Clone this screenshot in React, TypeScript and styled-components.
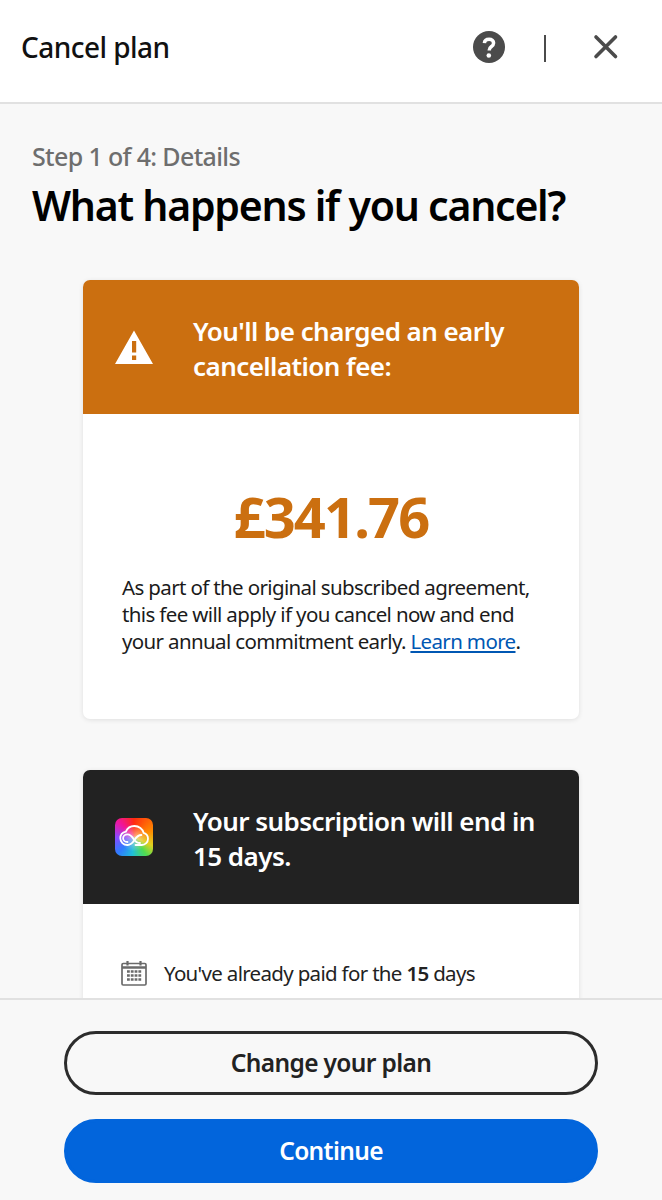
import React from "react";
import styled, { createGlobalStyle } from "styled-components";

const Global = createGlobalStyle`
  html, body { margin: 0; padding: 0; height: 1200px; overflow: hidden; background: #f8f8f8; }
  #root { height: 1200px; }
  * { box-sizing: border-box; }
`;

const Page = styled.div`
  height: 1200px;
  display: flex;
  flex-direction: column;
  overflow: hidden;
  background: #f8f8f8;
  font-family: "Noto Sans", "Open Sans", sans-serif;
  color: #000;
`;

const Header = styled.header`
  flex: none;
  height: 104px;
  background: #fff;
  border-bottom: 2px solid #e1e1e1;
  display: flex;
  align-items: center;
  padding: 0 43px 8px 21px;
`;

const HeaderTitle = styled.div`
  flex: 1;
  font-size: 28px;
  font-weight: 500;
  letter-spacing: -0.55px;
  color: #111;
`;

const HeaderActions = styled.div`
  display: flex;
  align-items: center;
`;

const Divider = styled.span`
  width: 2px;
  height: 27px;
  background: #4b4b4b;
  margin: 2px 47px 0 38px;
`;

const Main = styled.main`
  flex: 1;
  min-height: 0;
  overflow: hidden;
  padding: 34px 83px 0 32px;
`;

const Step = styled.div`
  font-size: 25px;
  line-height: 36px;
  font-weight: 500;
  letter-spacing: -0.65px;
  color: #6e6e6e;
`;

const Title = styled.h1`
  margin: 3px 0 47px;
  font-size: 41px;
  line-height: 56px;
  font-weight: 600;
  letter-spacing: -1.25px;
  color: #000;
  white-space: nowrap;
`;

const Card = styled.section`
  margin: 0 0 51px 51px;
  width: 496px;
  background: #fff;
  border-radius: 7px;
  overflow: hidden;
  box-shadow: 0 1px 5px rgba(0, 0, 0, 0.1);
`;

const CardHead = styled.div<{ $bg: string }>`
  height: 134px;
  background: ${(p) => p.$bg};
  display: flex;
  align-items: center;
  padding: 0 40px 0 32px;
  gap: 40px;
  color: #fff;
`;

const HeadIcon = styled.div`
  flex: none;
  width: 38px;
  height: 38px;
  display: flex;
`;

const LogoTile = styled(HeadIcon)`
  border-radius: 7px;
  background:
    radial-gradient(circle at 50% 52%, rgba(255, 225, 225, 0.6) 0%, rgba(255, 255, 255, 0) 50%),
    conic-gradient(
      from 0deg at 50% 50%,
      #ff2a10 0deg,
      #ff8a00 70deg,
      #e0d020 115deg,
      #50dc50 145deg,
      #20c0d8 185deg,
      #2f7cff 225deg,
      #8c48ff 270deg,
      #f0149c 315deg,
      #ff2a10 360deg
    );
`;

const HeadText = styled.div`
  margin-top: 3px;
  font-size: 26px;
  line-height: 35px;
  font-weight: 600;
  letter-spacing: -0.56px;
`;

const FeeBody = styled.div`
  height: 305px;
  padding: 64px 38px 0;
`;

const Amount = styled.div`
  text-align: center;
  font-size: 56px;
  line-height: 76px;
  font-weight: 700;
  letter-spacing: -1.85px;
  color: #cb6f10;
`;

const Body = styled.p`
  margin: 20px 0 0 1px;
  font-size: 20.5px;
  line-height: 27px;
  letter-spacing: -0.64px;
  color: #1b1b1b;
  white-space: nowrap;
`;

const TextLink = styled.a`
  color: #0057b3;
  text-decoration: underline;
`;

const SubBody = styled.div`
  padding: 54px 38px 60px;
`;

const InfoRow = styled.div`
  display: flex;
  align-items: center;
  gap: 17px;
  font-size: 20.5px;
  line-height: 30px;
  letter-spacing: -0.68px;
  color: #222;
`;

const Strong = styled.b`
  font-weight: 600;
`;

const Footer = styled.footer`
  flex: none;
  height: 202px;
  background: #f8f8f8;
  border-top: 2px solid #e1e1e1;
  padding: 31px 64px 0;
  display: flex;
  flex-direction: column;
  gap: 24px;
`;

const Button = styled.button<{ $primary?: boolean }>`
  height: 64px;
  width: 100%;
  border-radius: 32px;
  border: 3px solid ${(p) => (p.$primary ? "#0265dc" : "#2c2c2c")};
  background: ${(p) => (p.$primary ? "#0265dc" : "transparent")};
  color: ${(p) => (p.$primary ? "#fff" : "#222")};
  font-family: inherit;
  font-size: 24.5px;
  font-weight: 600;
  letter-spacing: -0.65px;
  padding: 0 0 2px;
`;

const HelpIcon = () => (
  <svg width="34" height="34" viewBox="0 0 34 34">
    <circle cx="17" cy="17" r="16" fill="#4b4b4b" />
    <path
      d="M12.400 13.200c.2-2.600 2.200-3.900 4.700-3.900 2.700 0 4.500 1.500 4.500 3.700 0 1.900-1.100 2.800-2.400 3.700-1.300.9-1.900 1.700-1.900 3.300v.6"
      fill="none"
      stroke="#fff"
      strokeWidth="3.500"
    />
    <circle cx="16.800" cy="25.500" r="2.300" fill="#fff" />
  </svg>
);

const CloseIcon = () => (
  <svg width="26" height="26" viewBox="0 0 26 26" fill="none" stroke="#4b4b4b" strokeWidth="3.600" strokeLinecap="round">
    <path d="M3 3l19.500 19.500M22.500 3L3 22.500" />
  </svg>
);

const WarningIcon = () => (
  <svg width="38" height="38" viewBox="0 0 38 38">
    <path fillRule="evenodd" fill="#fff" d="M19 2.500L38 36H0zM17 13v11.500h4.200V13zM17 27.500V32h4.200v-4.500z" />
  </svg>
);

const CloudGlyph = () => (
  <svg width="38" height="38" viewBox="0 0 38 38" fill="none" stroke="#fff" strokeWidth="1.800" strokeLinecap="round">
    <path d="M12.500 27C8.400 27 5.300 24 5.300 20.300c0-3.300 2.300-6 5.600-6.700C12.400 10.200 15.500 8 19.300 8c4.700 0 8.400 3 9.300 6.900 2.700.8 4.400 3 4.400 5.800 0 3.500-2.700 6.300-6.200 6.300h-6.300" />
    <path d="M12.500 27c3.300 0 5.300-2.400 7-5 1.700-2.700 3.700-5 6.900-5" />
    <path d="M12.500 24c-2.600 0-4.400-1.700-4.400-3.800 0-2.200 1.900-3.800 4.400-3.800 3 0 4.700 2.500 6.300 4.800 1.500 2.300 3.200 3.800 6.200 3.800" />
  </svg>
);

const CalendarIcon = () => (
  <svg width="26" height="26" viewBox="0 0 26 26" fill="none">
    <rect x="1" y="3.500" width="24" height="21.500" rx="1.200" stroke="#6a6a6a" strokeWidth="1.700" />
    <path d="M1 7.500h24" stroke="#6a6a6a" strokeWidth="2.400" />
    <path d="M6.500 1v4.500M19.500 1v4.500" stroke="#6a6a6a" strokeWidth="2.200" />
    <path d="M6 11.500h14.500M6 15.500h14.500M6 19.500h14.500" stroke="#6a6a6a" strokeWidth="2.500" strokeDasharray="2.800 1" />
  </svg>
);

export default function App() {
  return (
    <Page>
      <Global />
      <Header>
        <HeaderTitle>Cancel plan</HeaderTitle>
        <HeaderActions>
          <HelpIcon />
          <Divider />
          <CloseIcon />
        </HeaderActions>
      </Header>
      <Main>
        <Step>Step 1 of 4: Details</Step>
        <Title>What happens if you cancel?</Title>
        <Card>
          <CardHead $bg="#cb6f10">
            <HeadIcon>
              <WarningIcon />
            </HeadIcon>
            <HeadText>
              You'll be charged an early
              <br />
              cancellation fee:
            </HeadText>
          </CardHead>
          <FeeBody>
            <Amount>£341.76</Amount>
            <Body>
              As part of the original subscribed agreement,
              <br />
              this fee will apply if you cancel now and end
              <br />
              your annual commitment early. <TextLink>Learn more</TextLink>.
            </Body>
          </FeeBody>
        </Card>
        <Card>
          <CardHead $bg="#222222">
            <LogoTile>
              <CloudGlyph />
            </LogoTile>
            <HeadText>
              Your subscription will end in
              <br />
              15 days.
            </HeadText>
          </CardHead>
          <SubBody>
            <InfoRow>
              <CalendarIcon />
              <span>
                You've already paid for the <Strong>15</Strong> days
              </span>
            </InfoRow>
          </SubBody>
        </Card>
      </Main>
      <Footer>
        <Button>Change your plan</Button>
        <Button $primary>Continue</Button>
      </Footer>
    </Page>
  );
}
